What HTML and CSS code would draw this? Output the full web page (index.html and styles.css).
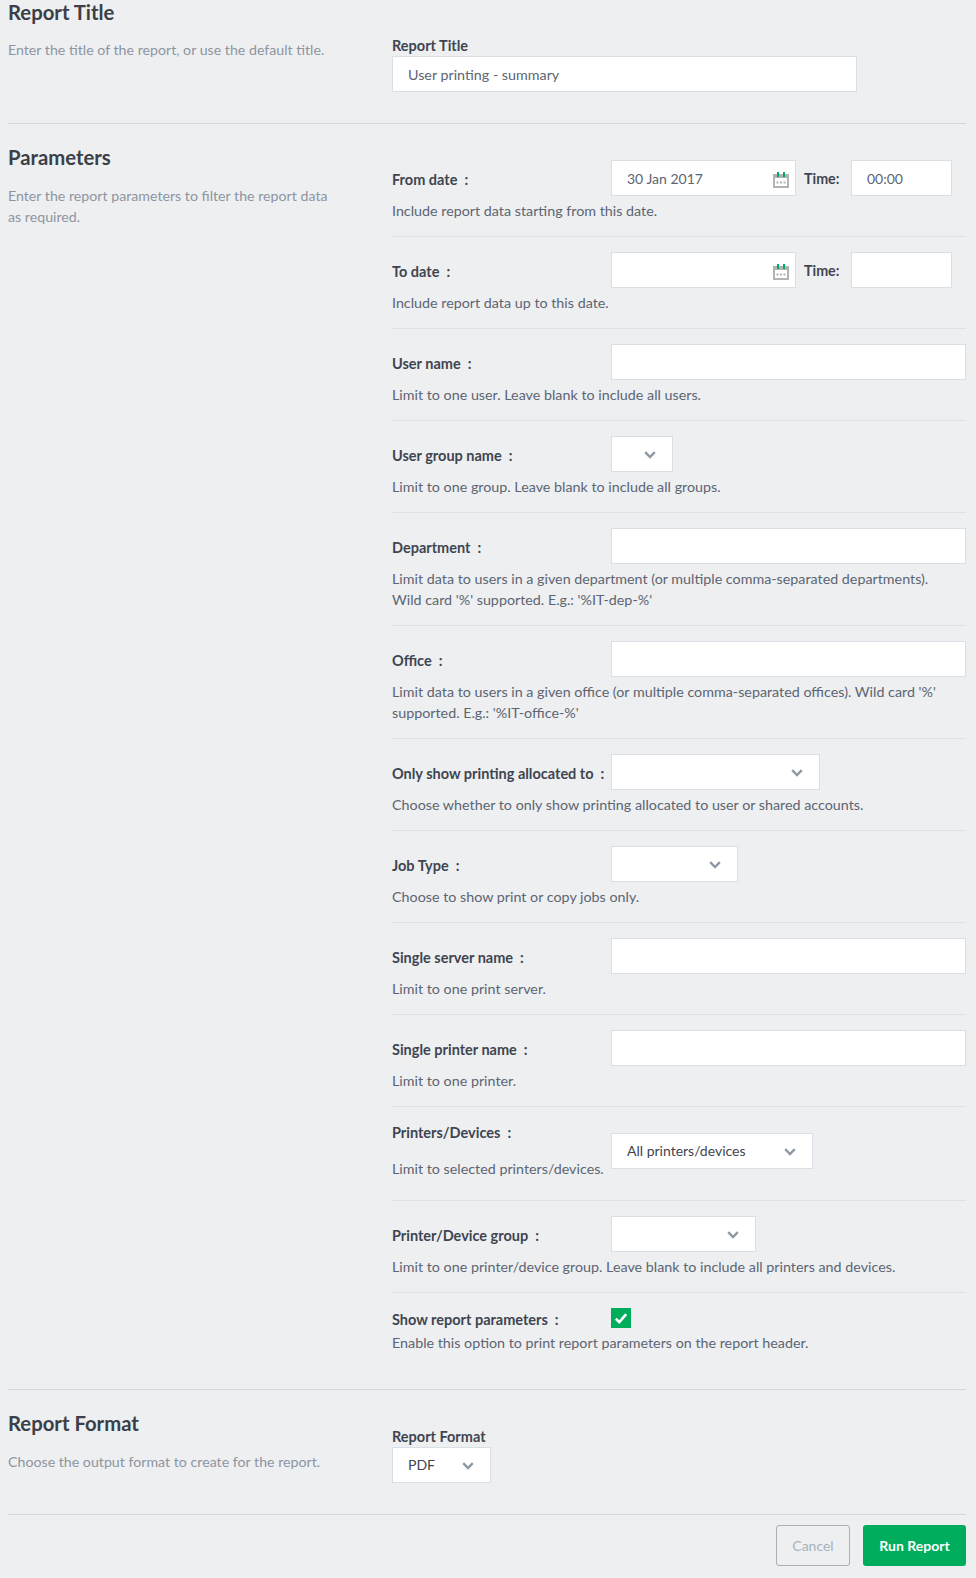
FILE: index.html
```html
<!DOCTYPE html>
<html lang="en">
<head>
<meta charset="utf-8">
<title>Report</title>
<link rel="stylesheet" href="styles.css">
</head>
<body>
<svg class="defs" width="0" height="0" aria-hidden="true">
  <defs>
    <symbol id="chev" viewBox="0 0 12 8"><path d="M1.200 1.200 6 6 10.800 1.200" fill="none" stroke="#8f98a3" stroke-width="2.400"/></symbol>
    <symbol id="cal" viewBox="0 0 16 16">
      <path d="M0 2h16v14H0z" fill="#b3b3b3"/>
      <path d="M2 6h12v8H2z" fill="#fff"/>
      <path d="M4 0h2v5H4zM10 0h2v5h-2z" fill="#00ad5c"/>
      <path d="M3.500 9.500h2v2h-2zM7 9.500h2v2H7zM10.500 9.500h2v2h-2z" fill="#b3b3b3"/>
    </symbol>
  </defs>
</svg>
<main class="page">
  <section class="section first">
    <div class="intro">
      <h2>Report Title</h2>
      <p>Enter the title of the report, or use the default title.</p>
    </div>
    <div class="fields top-field">
      <div class="stack-label">Report Title</div>
      <div class="box w-title"><span>User printing - summary</span></div>
    </div>
  </section>

  <section class="section">
    <div class="intro">
      <h2>Parameters</h2>
      <p>Enter the report parameters to filter the report data as required.</p>
    </div>
    <div class="fields params">
      <div class="row">
        <div class="head">
          <label class="lab">From date<i>:</i></label>
          <div class="box w-date"><span>30 Jan 2017</span><svg class="cal"><use href="#cal"/></svg></div>
          <b class="time">Time:</b>
          <div class="box w-time"><span>00:00</span></div>
        </div>
        <p class="help">Include report data starting from this date.</p>
      </div>
      <div class="row">
        <div class="head">
          <label class="lab">To date<i>:</i></label>
          <div class="box w-date"><svg class="cal"><use href="#cal"/></svg></div>
          <b class="time">Time:</b>
          <div class="box w-time"></div>
        </div>
        <p class="help">Include report data up to this date.</p>
      </div>
      <div class="row">
        <div class="head">
          <label class="lab">User name<i>:</i></label>
          <div class="box grow"></div>
        </div>
        <p class="help">Limit to one user. Leave blank to include all users.</p>
      </div>
      <div class="row">
        <div class="head">
          <label class="lab">User group name<i>:</i></label>
          <div class="box sel w-group"><svg class="chev"><use href="#chev"/></svg></div>
        </div>
        <p class="help">Limit to one group. Leave blank to include all groups.</p>
      </div>
      <div class="row">
        <div class="head">
          <label class="lab">Department<i>:</i></label>
          <div class="box grow"></div>
        </div>
        <p class="help">Limit data to users in a given department (or multiple comma-separated departments).<br>Wild card '%' supported. E.g.: '%IT-dep-%'</p>
      </div>
      <div class="row">
        <div class="head">
          <label class="lab">Office<i>:</i></label>
          <div class="box grow"></div>
        </div>
        <p class="help">Limit data to users in a given office (or multiple comma-separated offices). Wild card '%'<br>supported. E.g.: '%IT-office-%'</p>
      </div>
      <div class="row">
        <div class="head">
          <label class="lab">Only show printing allocated to<i>:</i></label>
          <div class="box sel w-alloc"><svg class="chev"><use href="#chev"/></svg></div>
        </div>
        <p class="help">Choose whether to only show printing allocated to user or shared accounts.</p>
      </div>
      <div class="row">
        <div class="head">
          <label class="lab">Job Type<i>:</i></label>
          <div class="box sel w-job"><svg class="chev"><use href="#chev"/></svg></div>
        </div>
        <p class="help">Choose to show print or copy jobs only.</p>
      </div>
      <div class="row">
        <div class="head">
          <label class="lab">Single server name<i>:</i></label>
          <div class="box grow"></div>
        </div>
        <p class="help">Limit to one print server.</p>
      </div>
      <div class="row">
        <div class="head">
          <label class="lab">Single printer name<i>:</i></label>
          <div class="box grow"></div>
        </div>
        <p class="help">Limit to one printer.</p>
      </div>
      <div class="row side">
        <div class="side-text">
          <label class="lab plain">Printers/Devices<i>:</i></label>
          <p class="help">Limit to selected printers/devices.</p>
        </div>
        <div class="box sel w-printers"><span class="strong">All printers/devices</span><svg class="chev"><use href="#chev"/></svg></div>
      </div>
      <div class="row">
        <div class="head">
          <label class="lab">Printer/Device group<i>:</i></label>
          <div class="box sel w-devgroup"><svg class="chev"><use href="#chev"/></svg></div>
        </div>
        <p class="help">Limit to one printer/device group. Leave blank to include all printers and devices.</p>
      </div>
      <div class="row last">
        <div class="head check-head">
          <label class="lab">Show report parameters<i>:</i></label>
          <span class="check"><svg viewBox="0 0 20 20" width="20" height="20"><path d="M4.800 10.800 8.300 14.200 15.200 6.200" fill="none" stroke="#fff" stroke-width="2.600"/></svg></span>
        </div>
        <p class="help tight">Enable this option to print report parameters on the report header.</p>
      </div>
    </div>
  </section>

  <section class="section">
    <div class="intro">
      <h2>Report Format</h2>
      <p>Choose the output format to create for the report.</p>
    </div>
    <div class="fields top-field format-field">
      <div class="stack-label">Report Format</div>
      <div class="box sel w-format"><span class="strong">PDF</span><svg class="chev"><use href="#chev"/></svg></div>
    </div>
  </section>

  <div class="actions">
    <button class="btn cancel" type="button">Cancel</button>
    <button class="btn run" type="button">Run Report</button>
  </div>
</main>
</body>
</html>
```
FILE: styles.css
```css
* { box-sizing: border-box; }
html, body { margin: 0; padding: 0; }
body {
  background: #edeff1;
  font-family: "Lato", "Noto Sans", sans-serif;
  font-size: 14px;
  line-height: 21px;
  color: #5d6572;
  height: 1578px;
  overflow: hidden;
}
.defs { position: absolute; }
.page { padding: 0 10px 0 8px; }
.section {
  display: flex;
  border-bottom: 1px solid #d4d8dc;
}
.intro { width: 384px; flex: none; padding-top: 21px; }
.first .intro { padding-top: 0; }
.first .intro h2 { margin-bottom: 15px; }
.intro h2 {
  margin: 0 0 16px;
  font-size: 20.300px;
  line-height: 24px;
  font-weight: 700;
  color: #3b4048;
}
.intro p { margin: 0; width: 335px; color: #8d95a1; font-size: 14.200px; }
.fields { flex: 1; min-width: 0; }
.top-field { padding: 35px 0 31px; }
.format-field { padding-top: 36px; }
.params { padding-top: 21px; }
.stack-label { font-weight: 700; color: #3f4550; height: 21px; font-size: 14.500px; }
.box {
  height: 36px;
  background: #fff;
  border: 1px solid #d9dfe4;
  display: flex;
  align-items: center;
  padding: 0 15px;
  flex: none;
  color: #5d6572;
}
.grow { flex: 1; }
.w-title { width: 465px; font-size: 14.300px; }
.w-date { width: 185px; justify-content: space-between; padding-right: 6px; }
.w-time { width: 101px; }
.w-group { width: 62px; }
.w-alloc { width: 209px; }
.w-job { width: 127px; }
.w-printers { width: 202px; }
.w-devgroup { width: 145px; }
.w-format { width: 99px; }
.sel { justify-content: flex-end; padding-right: 16px; position: relative; }
.sel .strong { position: absolute; left: 15px; top: 6px; color: #3f4550; }
.w-date .cal { margin-left: auto; margin-top: 3px; }
.cal { width: 16px; height: 16px; display: block; }
.chev { width: 12px; height: 8px; display: block; margin-top: 1px; }
.row { padding: 15px 0 15px; border-bottom: 1px solid #dfe2e5; }
.last { border-bottom: 0; padding-bottom: 36px; }
.head { display: flex; align-items: center; }
.lab {
  width: 219px;
  flex: none;
  font-weight: 700;
  color: #3f4550;
  padding-top: 2px;
  font-size: 14.500px;
}
.lab i { font-style: normal; margin-left: 7px; font-weight: 700; }
.time { margin-left: 8px; width: 36px; color: #3f4550; margin-right: 11px; font-size: 14.300px; }
.help { margin: 4px 0 0; font-size: 14.300px; }
.side { display: flex; padding-bottom: 21px; }
.side-text { width: 219px; flex: none; }
.side .lab { display: block; padding-top: 0; }
.side .help { margin-top: 15px; white-space: nowrap; }
.side > .box { margin-top: 11px; }
.check-head { align-items: flex-start; height: 20px; }
.check-head .lab { padding-top: 1px; }
.check { width: 20px; height: 20px; background: #00ad5c; display: block; }
.check svg { display: block; }
.help.tight { margin-top: 4px; }
.actions {
  display: flex;
  justify-content: flex-end;
  gap: 13px;
  padding-top: 10px;
}
.btn {
  height: 41px;
  font: inherit;
  border-radius: 3px;
  padding: 0;
}
.cancel { width: 74px; background: transparent; border: 1px solid #a5b1b3; color: #a9b3bb; }
.run { width: 103px; background: #00ad5c; border: 0; color: #fff; font-weight: 700; }
```
